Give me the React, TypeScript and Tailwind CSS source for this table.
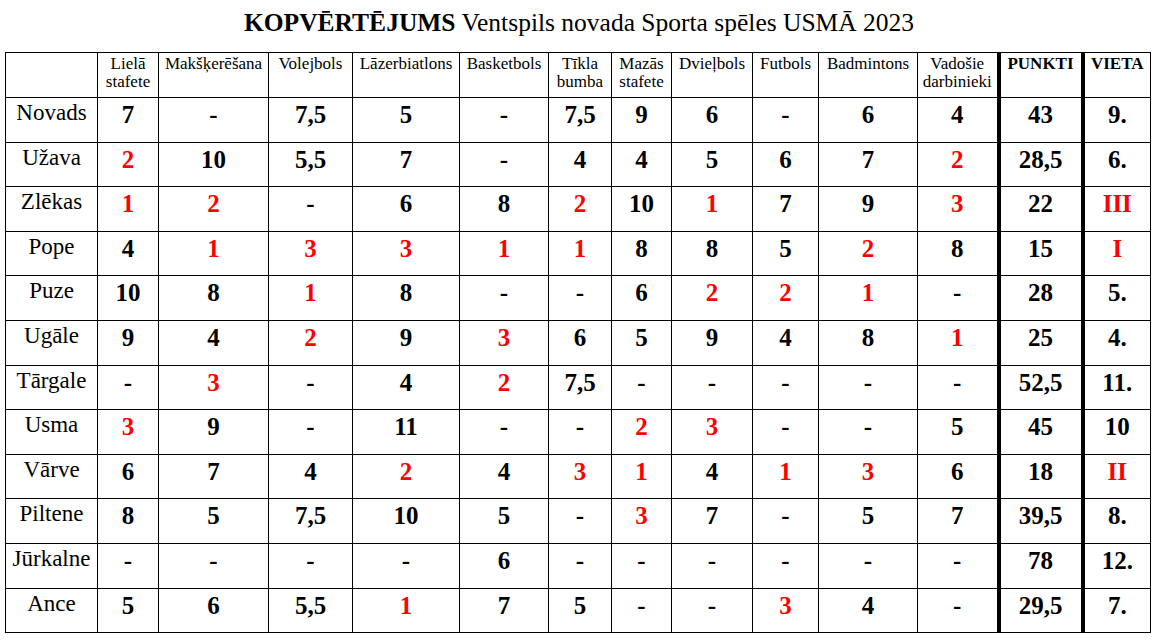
import React from "react";

type Cell = string | [string, true];

const headers: string[][] = [
  [""],
  ["Lielā", "stafete"],
  ["Makšķerēšana"],
  ["Volejbols"],
  ["Lāzerbiatlons"],
  ["Basketbols"],
  ["Tīkla", "bumba"],
  ["Mazās", "stafete"],
  ["Dvieļbols"],
  ["Futbols"],
  ["Badmintons"],
  ["Vadošie", "darbinieki"],
];

const widths = [92, 61, 110, 84, 107, 89, 63, 60, 81, 66, 99, 81, 84, 68];

const R = (v: string): Cell => [v, true];

const rows: { name: string; vals: Cell[] }[] = [
  { name: "Novads", vals: ["7", "-", "7,5", "5", "-", "7,5", "9", "6", "-", "6", "4", "43", "9."] },
  { name: "Užava", vals: [R("2"), "10", "5,5", "7", "-", "4", "4", "5", "6", "7", R("2"), "28,5", "6."] },
  { name: "Zlēkas", vals: [R("1"), R("2"), "-", "6", "8", R("2"), "10", R("1"), "7", "9", R("3"), "22", R("III")] },
  { name: "Pope", vals: ["4", R("1"), R("3"), R("3"), R("1"), R("1"), "8", "8", "5", R("2"), "8", "15", R("I")] },
  { name: "Puze", vals: ["10", "8", R("1"), "8", "-", "-", "6", R("2"), R("2"), R("1"), "-", "28", "5."] },
  { name: "Ugāle", vals: ["9", "4", R("2"), "9", R("3"), "6", "5", "9", "4", "8", R("1"), "25", "4."] },
  { name: "Tārgale", vals: ["-", R("3"), "-", "4", R("2"), "7,5", "-", "-", "-", "-", "-", "52,5", "11."] },
  { name: "Usma", vals: [R("3"), "9", "-", "11", "-", "-", R("2"), R("3"), "-", "-", "5", "45", "10"] },
  { name: "Vārve", vals: ["6", "7", "4", R("2"), "4", R("3"), R("1"), "4", R("1"), R("3"), "6", "18", R("II")] },
  { name: "Piltene", vals: ["8", "5", "7,5", "10", "5", "-", R("3"), "7", "-", "5", "7", "39,5", "8."] },
  { name: "Jūrkalne", vals: ["-", "-", "-", "-", "6", "-", "-", "-", "-", "-", "-", "78", "12."] },
  { name: "Ance", vals: ["5", "6", "5,5", R("1"), "7", "5", "-", "-", R("3"), "4", "-", "29,5", "7."] },
];

const serif = "font-['Liberation_Serif','Times_New_Roman',serif]";

export default function App() {
  return (
    <div className={`w-[1157px] h-[640px] bg-white text-black overflow-hidden ${serif}`}>
      <div className={`h-[52px] pt-[9px] text-center text-[25.5px] leading-[28px] pl-[1px] ${serif}`}>
        <span className="font-bold">KOPVĒRTĒJUMS</span> Ventspils novada Sporta spēles USMĀ 2023
      </div>
      <table className={`ml-[5px] border-collapse table-fixed w-[1145px] ${serif}`}>
        <colgroup>
          {widths.map((w, i) => (
            <col key={i} style={{ width: w }} />
          ))}
        </colgroup>
        <thead>
          <tr className="h-[45px]">
            {headers.map((h, i) => (
              <th
                key={i}
                className={`border border-black align-top text-center font-normal text-[17px] leading-[18px] pt-[2px] px-0 ${serif}`}
              >
                {h.map((l, j) => (
                  <div key={j}>{l}</div>
                ))}
              </th>
            ))}
            <th className={`border border-black border-l-[4px] align-top text-center font-bold text-[17px] leading-[18px] pt-[2px] px-0 ${serif}`}>
              PUNKTI
            </th>
            <th className={`border border-black border-l-[4px] align-top text-center font-bold text-[17px] leading-[18px] pt-[2px] px-0 ${serif}`}>
              VIETA
            </th>
          </tr>
        </thead>
        <tbody>
          {rows.map((r) => (
            <tr key={r.name} className="h-[44.6px]">
              <td className={`border border-black align-top text-center text-[23px] leading-[26px] pt-[2px] px-0 ${serif}`}>
                {r.name}
              </td>
              {r.vals.map((v, i) => {
                const red = Array.isArray(v);
                const text = Array.isArray(v) ? v[0] : v;
                const thick = i >= 11;
                return (
                  <td
                    key={i}
                    className={`border border-black align-top text-center font-bold text-[25px] leading-[28px] pt-[3px] px-0 ${serif} ${
                      thick ? "border-l-[4px]" : ""
                    } ${red ? "text-[#ff0000]" : "text-black"}`}
                  >
                    {text}
                  </td>
                );
              })}
            </tr>
          ))}
        </tbody>
      </table>
    </div>
  );
}
